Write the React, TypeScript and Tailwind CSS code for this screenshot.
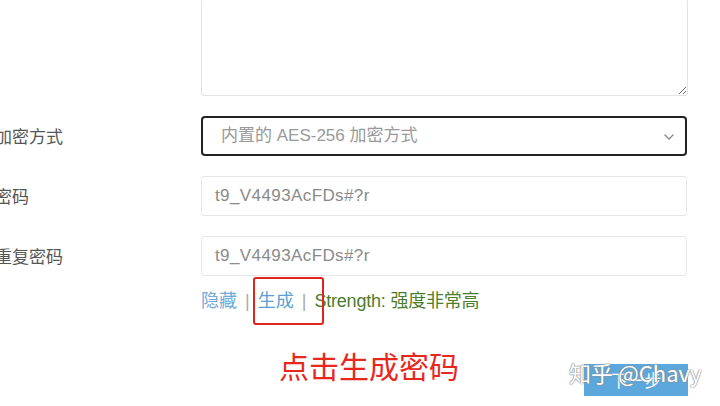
import React from "react";

const cjk = { fontFamily: '"Noto Sans CJK SC", "Noto Sans", sans-serif' };
const mixed = { fontFamily: '"Liberation Sans", "Noto Sans CJK SC", sans-serif' };

function Row({ label, children }: { label: string; children: React.ReactNode }) {
  return (
    <div className="flex items-center">
      <div className="w-[201px] shrink-0 overflow-hidden">
        <div className="-ml-[5px] text-[17px] text-[#555]" style={cjk}>
          {label}
        </div>
      </div>
      <div className="w-[486px]">{children}</div>
    </div>
  );
}

export default function App() {
  return (
    <div className="relative w-[720px] h-[406px] overflow-hidden bg-white">
      <div className="flex flex-col">
        <div className="flex">
          <div className="w-[201px] shrink-0" />
          <textarea
            readOnly
            className="w-[487px] h-[97px] -mt-[1px] border border-[#e3e3e3] rounded-[3px] bg-white outline-none block"
          />
        </div>

        <div className="mt-[20px]">
          <Row label="加密方式">
            <div className="h-[40px] border-2 border-[#222] rounded-[4px] flex items-center justify-between pl-[18px] pr-[10px]">
              <span className="text-[17px] text-[#999]" style={mixed}>
                内置的 AES-256 加密方式
              </span>
              <svg width="12" height="8" viewBox="0 0 12 8" className="mt-[1px]">
                <path d="M1.5 1.5 L6 6 L10.5 1.5" fill="none" stroke="#888" strokeWidth="1.3" />
              </svg>
            </div>
          </Row>
        </div>

        <div className="mt-[20px]">
          <Row label="密码">
            <div className="h-[40px] border border-[#e6e6e6] rounded-[3px] flex items-center pl-[13px]">
              <span className="text-[17px] text-[#8a8a8a] tracking-[0.4px]" style={mixed}>
                t9_V4493AcFDs#?r
              </span>
            </div>
          </Row>
        </div>

        <div className="mt-[20px]">
          <Row label="重复密码">
            <div className="h-[40px] border border-[#e6e6e6] rounded-[3px] flex items-center pl-[13px]">
              <span className="text-[17px] text-[#8a8a8a] tracking-[0.4px]" style={mixed}>
                t9_V4493AcFDs#?r
              </span>
            </div>
          </Row>
        </div>

        <div className="flex mt-[12px]">
          <div className="w-[201px] shrink-0" />
          <div className="relative flex items-center h-[27px] text-[18px]" style={mixed}>
            <span className="text-[#72a9d6]">隐藏</span>
            <span className="text-[#aaa] mx-[8px]">|</span>
            <span className="text-[#5c9fd3]">生成</span>
            <span className="text-[#aaa] mx-[8px]">|</span>
            <span className="text-[#4c7d2c] tracking-[-0.2px]">Strength: 强度非常高</span>
            <div className="absolute left-[52px] top-[-11px] w-[71px] h-[48px] border-2 border-[#e0251b] rounded-[3px]" />
          </div>
        </div>

        <div className="flex mt-[32px]">
          <div className="w-[279px] shrink-0" />
          <div className="text-[30px] leading-[36px] text-[#e8271d]" style={cjk}>
            点击生成密码
          </div>
        </div>
      </div>

      <div className="absolute left-[584px] top-[364px] w-[104px] h-[32px] bg-[#5ca7db] flex items-center justify-center">
        <span className="text-white text-[17px]" style={cjk}>下一步</span>
      </div>
      <div
        className="absolute left-[569px] top-[356px] text-[22px] text-white"
        style={{
          ...cjk,
          textShadow: "0 0 1px #888, 0 0 1px #888, 0 0 2px #999",
        }}
      >
        知乎 @Chavy
      </div>
    </div>
  );
}
